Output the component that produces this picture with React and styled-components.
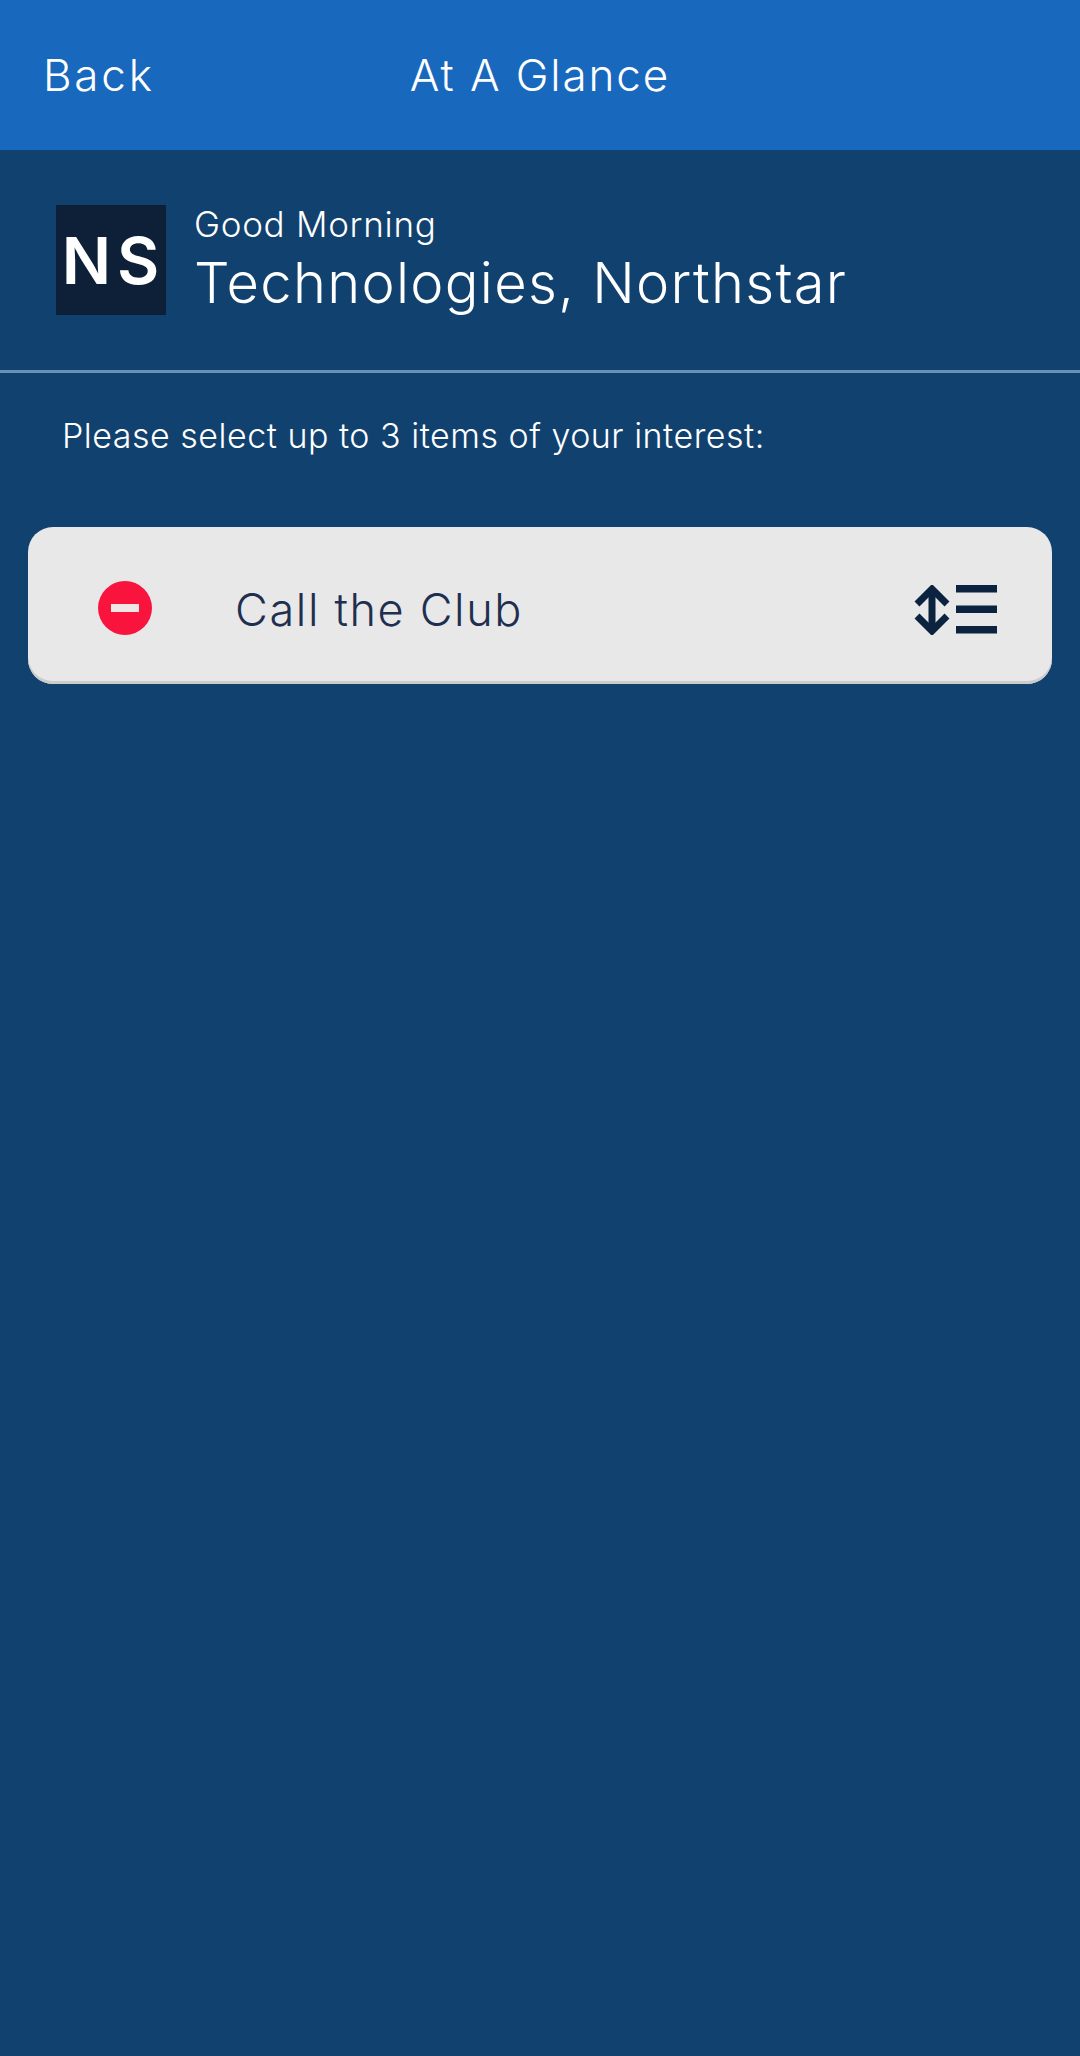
import React from "react";
import styled, { createGlobalStyle } from "styled-components";

const Global = createGlobalStyle`
  html, body { margin: 0; padding: 0; background: #11416e; }
  * { box-sizing: border-box; }
`;
const Page = styled.div`
  width: 1080px; height: 2056px; background: #11416e; color: #fff;
  font-family: "Inter", "Liberation Sans", sans-serif; font-weight: 320;
  overflow: hidden;
`;
const TopBar = styled.header`
  height: 150px; background: #1868bd; display: grid;
  grid-template-columns: 1fr auto 1fr; align-items: center; padding: 0 43px 1px;
`;
const BarText = styled.span`
  font-size: 44px; line-height: 50px; letter-spacing: ${p => p.$spacing}px;
`;
const Greeting = styled.section`
  height: 223px; display: flex; align-items: flex-start; gap: 28px;
  padding: 55px 0 0 56px; border-bottom: 3px solid #6a90b5;
`;
const Avatar = styled.div`
  width: 110px; height: 110px; background: #0d2037; display: flex;
  align-items: center; justify-content: center; font-size: 65px; font-weight: 600;
  letter-spacing: 6px; padding: 0 0 0 5px; flex: none;
`;
const Names = styled.div`
  display: flex; flex-direction: column;
`;
const Hello = styled.div`
  font-size: 35px; line-height: 38px; letter-spacing: 0.7px;
`;
const Company = styled.div`
  font-size: 56px; line-height: 68px; letter-spacing: 1.3px; margin-top: 6px;
`;
const Prompt = styled.p`
  margin: 0; padding: 43px 0 0 62px; font-size: 34px; line-height: 40px; font-weight: 350;
  letter-spacing: 0.5px;
`;
const Card = styled.div`
  margin: 71px 28px 0; height: 157px; background: #e8e8e8; border-radius: 25px;
  box-shadow: inset 0 -3px 0 #cccccc; display: flex; align-items: center;
  padding: 0 54px 0 70px; color: #1f2f4f;
`;
const Remove = styled.svg`
  width: 54px; height: 54px; flex: none; margin-top: 5px;
`;
const Label = styled.span`
  flex: 1; margin-left: 83px; font-size: 45px; line-height: 50px; letter-spacing: 1.65px; margin-top: 8px;
`;
const Reorder = styled.svg`
  width: 84px; height: 50px; flex: none; margin-top: 8px;
`;

export default function App() {
  return (
    <Page>
      <Global />
      <TopBar>
        <BarText $spacing={2.8}>Back</BarText>
        <BarText $spacing={1.9}>At A Glance</BarText>
        <span />
      </TopBar>
      <Greeting>
        <Avatar>NS</Avatar>
        <Names>
          <Hello>Good Morning</Hello>
          <Company>Technologies, Northstar</Company>
        </Names>
      </Greeting>
      <Prompt>Please select up to 3 items of your interest:</Prompt>
      <Card>
        <Remove viewBox="0 0 54 54">
          <circle cx="27" cy="27" r="27" fill="#f8143c" />
          <rect x="13" y="23" width="28" height="8" fill="#f0e6e6" />
        </Remove>
        <Label>Call the Club</Label>
        <Reorder viewBox="0 0 84 50" fill="none">
          <path d="M3 19 L18 4 L33 19 M3 31 L18 46 L33 31" stroke="#0c2340" strokeWidth="7" />
          <path d="M18 4 V46" stroke="#0c2340" strokeWidth="7" />
          <path d="M42 0h41v7.5H42zM42 20.500h41v7.500H42zM42 41h41v7.500H42z" fill="#0c2340" />
        </Reorder>
      </Card>
    </Page>
  );
}
